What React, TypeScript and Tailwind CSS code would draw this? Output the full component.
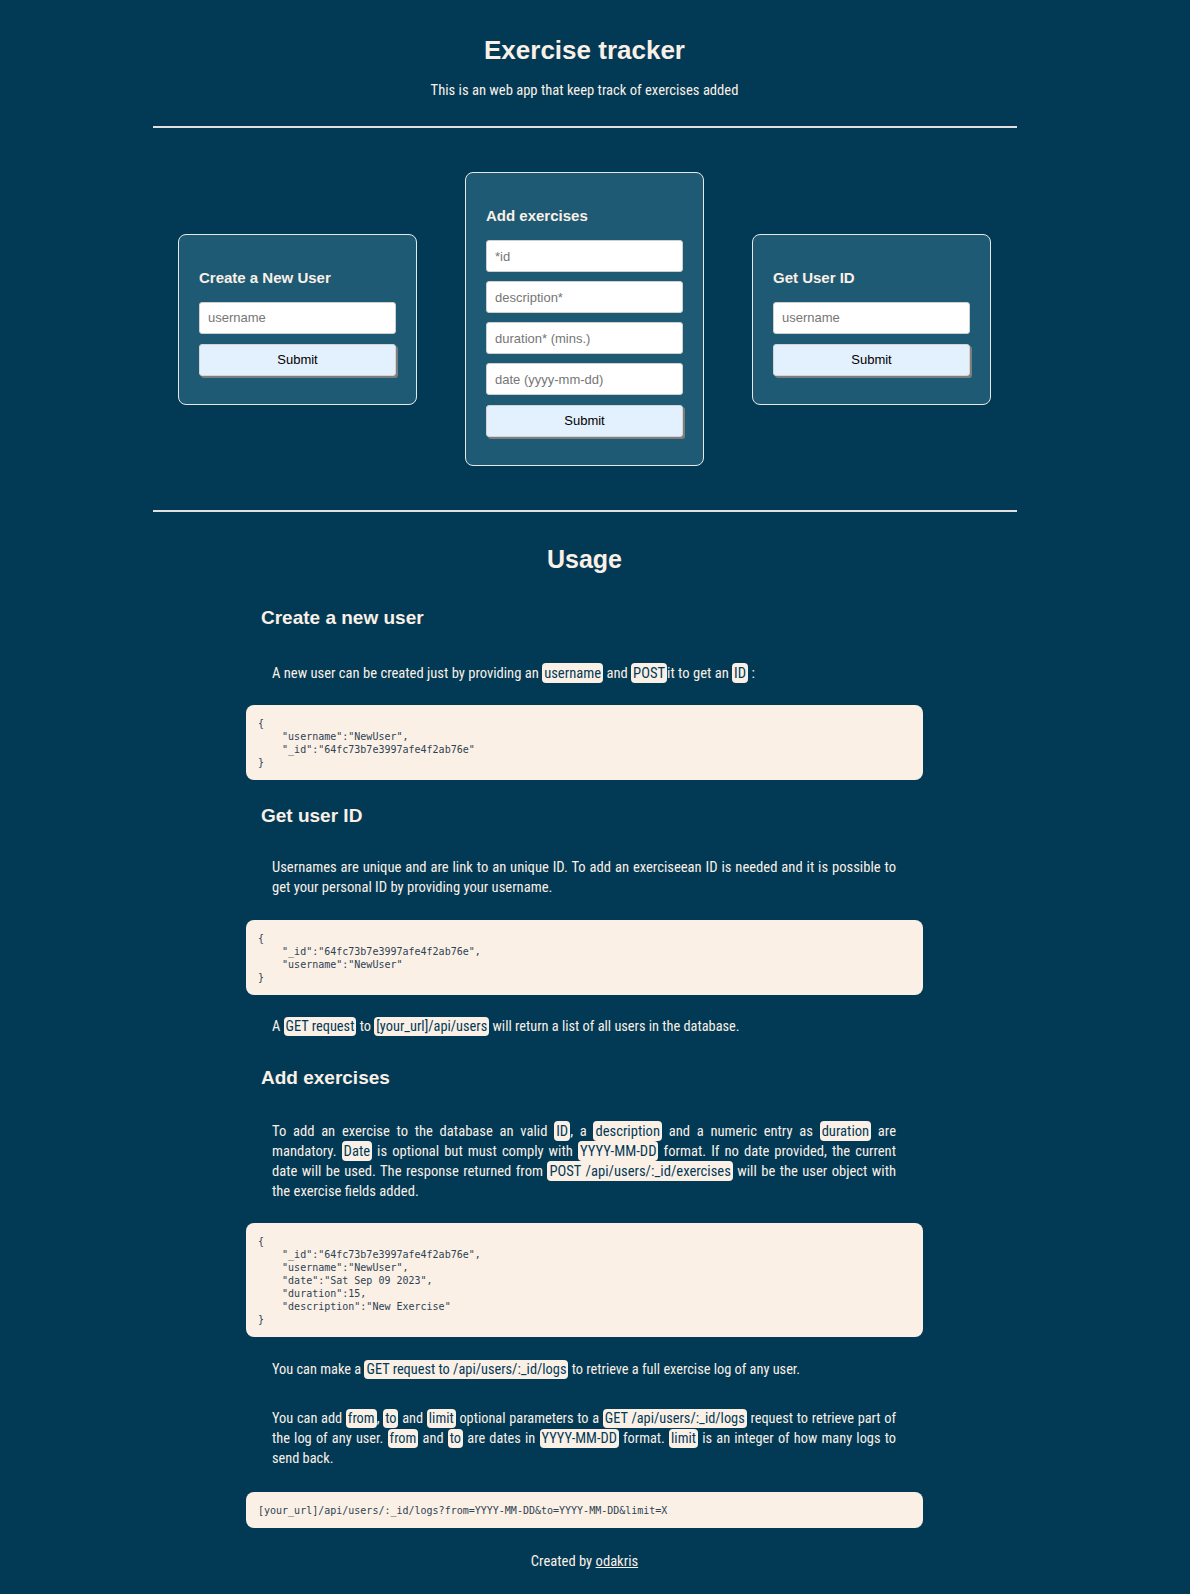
import React from 'react';

const narrow = "font-['Roboto_Condensed','Noto_Sans_Condensed','Noto_Sans',sans-serif] font-stretch-condensed";

const Tag = ({ children }: { children: React.ReactNode }) => (
  <span className="rounded-[4px] bg-[#faf0e6] px-[2px] py-[1px] text-[#023a56]">{children}</span>
);

const Field = ({ placeholder }: { placeholder: string }) => (
  <input
    type="text"
    placeholder={placeholder}
    className="block h-[32px] w-full rounded-[3px] border border-[#cfcfcf] bg-white px-[8px] font-['Liberation_Sans',sans-serif] text-[13px] text-black outline-none placeholder:text-[#767676]"
  />
);

const SubmitButton = () => (
  <button
    type="button"
    className="mt-[1px] block h-[32px] w-full rounded-[3px] border border-[#d4d4d4] bg-[#e3f0fd] font-['Liberation_Sans',sans-serif] text-[13px] text-black shadow-[2px_2px_0_#7d7d7d]"
  >
    Submit
  </button>
);

const Card = ({ title, fields }: { title: string; fields: string[] }) => (
  <div className="w-[239px] rounded-[8px] border border-[#e8e8e8] bg-[#1f5a75] px-[20px] pb-[28px] pt-[34px]">
    <h3 className="mb-[15px] font-['Liberation_Sans',sans-serif] text-[15px] leading-[18px] font-bold text-[#faf0e6]">{title}</h3>
    <form className="flex flex-col gap-[9px]" onSubmit={(e) => e.preventDefault()}>
      {fields.map((f) => (
        <Field key={f} placeholder={f} />
      ))}
      <SubmitButton />
    </form>
  </div>
);

const CodeBlock = ({ code }: { code: string }) => (
  <pre className="rounded-[8px] bg-[#faf0e6] px-[12px] pb-[11px] pt-[12px] font-['DejaVu_Sans_Mono',monospace] text-[10px] leading-[13px] whitespace-pre text-[#2f4252]">
    {code}
  </pre>
);

// paragraphs: sizes tuned so the lines break where the original does
const Para = ({ className, children }: { className: string; children: React.ReactNode }) => (
  <p className={`${className} ${narrow} pl-[26px] pr-[27px] text-justify leading-[20px]`}>{children}</p>
);

const newUserJson = `{
    "username":"NewUser",
    "_id":"64fc73b7e3997afe4f2ab76e"
}`;

const userIdJson = `{
    "_id":"64fc73b7e3997afe4f2ab76e",
    "username":"NewUser"
}`;

const exerciseJson = `{
    "_id":"64fc73b7e3997afe4f2ab76e",
    "username":"NewUser",
    "date":"Sat Sep 09 2023",
    "duration":15,
    "description":"New Exercise"
}`;

export default function App() {
  return (
    <div className="min-h-screen bg-[#023a56] pr-[21px] pb-[24px] font-['Liberation_Sans',sans-serif] text-[#faf0e6]">
      {/* header */}
      <header className="pt-[32px] text-center">
        <h1 className="text-[26px] leading-[37px] font-bold">Exercise tracker</h1>
        <p className={`mt-[12px] ${narrow} text-[14.6px] leading-[18px]`}>This is an web app that keep track of exercises added</p>
      </header>

      <hr className="mx-auto mt-[27px] h-[2px] w-[864px] border-0 bg-[#e0e0e0]" />

      {/* forms */}
      <div className="mt-[44px] flex items-center justify-center gap-[48px]">
        <Card title="Create a New User" fields={['username']} />
        <Card title="Add exercises" fields={['*id', 'description*', 'duration* (mins.)', 'date (yyyy-mm-dd)']} />
        <Card title="Get User ID" fields={['username']} />
      </div>

      <hr className="mx-auto mt-[44px] h-[2px] w-[864px] border-0 bg-[#e0e0e0]" />

      {/* usage */}
      <section className="mx-auto w-[677px]">
        <h2 className="mt-[29px] text-center text-[25px] leading-[36px] font-bold">Usage</h2>

        <h3 className="mt-[27px] px-[15px] text-[19px] leading-[28px] font-bold">Create a new user</h3>
        <Para className="mt-[31px] text-[14.6px]">
          A new user can be created just by providing an <Tag>username</Tag> and <Tag>POST</Tag>it to get an <Tag>ID</Tag> :
        </Para>
        <div className="mt-[22px]">
          <CodeBlock code={newUserJson} />
        </div>

        <h3 className="mt-[22px] px-[15px] text-[19px] leading-[28px] font-bold">Get user ID</h3>
        <Para className="mt-[27px] text-[14.6px]">
          Usernames are unique and are link to an unique ID. To add an exerciseean ID is needed and it is possible to get your personal ID by providing your username.
        </Para>
        <div className="mt-[23px]">
          <CodeBlock code={userIdJson} />
        </div>
        <Para className="mt-[22px] text-[14.35px]">
          A <Tag>GET request</Tag> to <Tag>[your_url]/api/users</Tag> will return a list of all users in the database.
        </Para>

        <h3 className="mt-[27px] px-[15px] text-[19px] leading-[28px] font-bold">Add exercises</h3>
        <Para className="mt-[29px] text-[14.6px]">
          To add an exercise to the database an valid <Tag>ID</Tag>, a <Tag>description</Tag> and a numeric entry as <Tag>duration</Tag> are mandatory. <Tag>Date</Tag> is optional but must comply with <Tag>YYYY-MM-DD</Tag> format. If no date provided, the current date will be used. The response returned from <Tag>POST /api/users/:_id/exercises</Tag> will be the user object with the exercise fields added.
        </Para>
        <div className="mt-[22px]">
          <CodeBlock code={exerciseJson} />
        </div>
        <Para className="mt-[23px] text-[14.35px]">
          You can make a <Tag>GET request to /api/users/:_id/logs</Tag> to retrieve a full exercise log of any user.
        </Para>
        <Para className="mt-[29px] text-[14.35px]">
          You can add <Tag>from</Tag>, <Tag>to</Tag> and <Tag>limit</Tag> optional parameters to a <Tag>GET /api/users/:_id/logs</Tag> request to retrieve part of the log of any user. <Tag>from</Tag> and <Tag>to</Tag> are dates in <Tag>YYYY-MM-DD</Tag> format. <Tag>limit</Tag> is an integer of how many logs to send back.
        </Para>
        <div className="mt-[23px]">
          <CodeBlock code="[your_url]/api/users/:_id/logs?from=YYYY-MM-DD&to=YYYY-MM-DD&limit=X" />
        </div>

        <footer className={`mt-[23px] text-center ${narrow} text-[14.6px] leading-[20px]`}>
          Created by{' '}
          <a href="#" className="underline">
            odakris
          </a>
        </footer>
      </section>
    </div>
  );
}
